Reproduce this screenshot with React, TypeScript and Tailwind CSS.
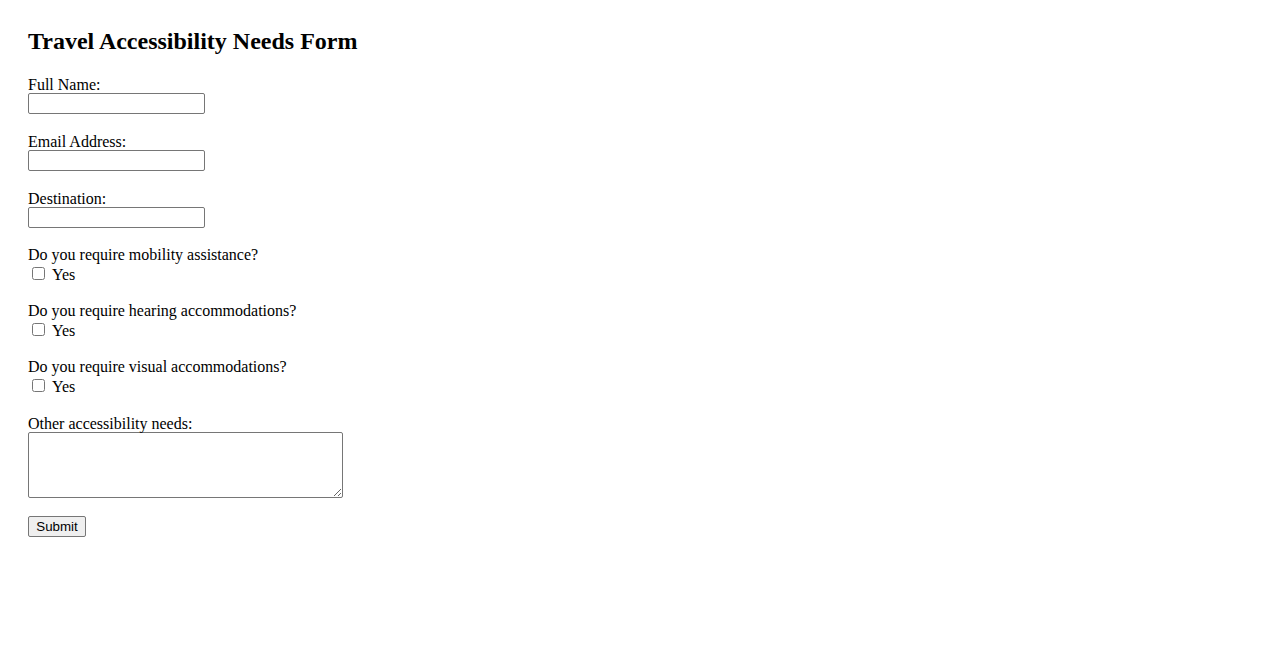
import React from "react";

const serif = { fontFamily: '"Liberation Serif", "Times New Roman", serif' };
const sans = { fontFamily: '"Liberation Sans", Arial, sans-serif' };

function TextField({ label }: { label: string }) {
  return (
    <div className="mb-[17px]">
      <label className="block text-[16px] leading-[18px] pt-[2px] text-black">{label}</label>
      <input
        type="text"
        className="block w-[177px] h-[21px] border border-[#767676] rounded-[2px] bg-white px-[2px] text-[13.33px] mt-[-1px]"
        style={sans}
      />
    </div>
  );
}

function CheckField({ label }: { label: string }) {
  return (
    <div className="mb-[17px]">
      <div className="text-[16px] leading-[18px] pt-[1px] text-black">{label}</div>
      <label className="flex items-start h-[20px] text-[16px] leading-[18px]">
        <input type="checkbox" className="w-[13px] h-[13px] ml-[4px] mr-[7px] mt-[3px]" />
        <span className="pt-[2px]">Yes</span>
      </label>
    </div>
  );
}

export default function App() {
  return (
    <div className="bg-white min-h-[650px] w-full pl-[28px] pt-[28px] text-black" style={serif}>
      <h2 className="text-[24px] leading-[27px] font-bold mb-[19px]">Travel Accessibility Needs Form</h2>
      <form onSubmit={(e) => e.preventDefault()}>
        <TextField label="Full Name:" />
        <TextField label="Email Address:" />
        <TextField label="Destination:" />
        <CheckField label="Do you require mobility assistance?" />
        <CheckField label="Do you require hearing accommodations?" />
        <CheckField label="Do you require visual accommodations?" />
        <div className="mb-[16px]">
          <label className="block text-[16px] leading-[18px] pt-[2px]">Other accessibility needs:</label>
          <textarea
            className="block w-[315px] h-[66px] border border-[#767676] rounded-[2px] bg-white text-[13.33px] mt-[-1px]"
          />
        </div>
        <button
          type="submit"
          className="h-[21px] w-[58px] border border-[#767676] rounded-[2px] bg-[#efefef] text-[13.33px] text-black leading-[15px]"
          style={sans}
        >
          Submit
        </button>
      </form>
    </div>
  );
}
